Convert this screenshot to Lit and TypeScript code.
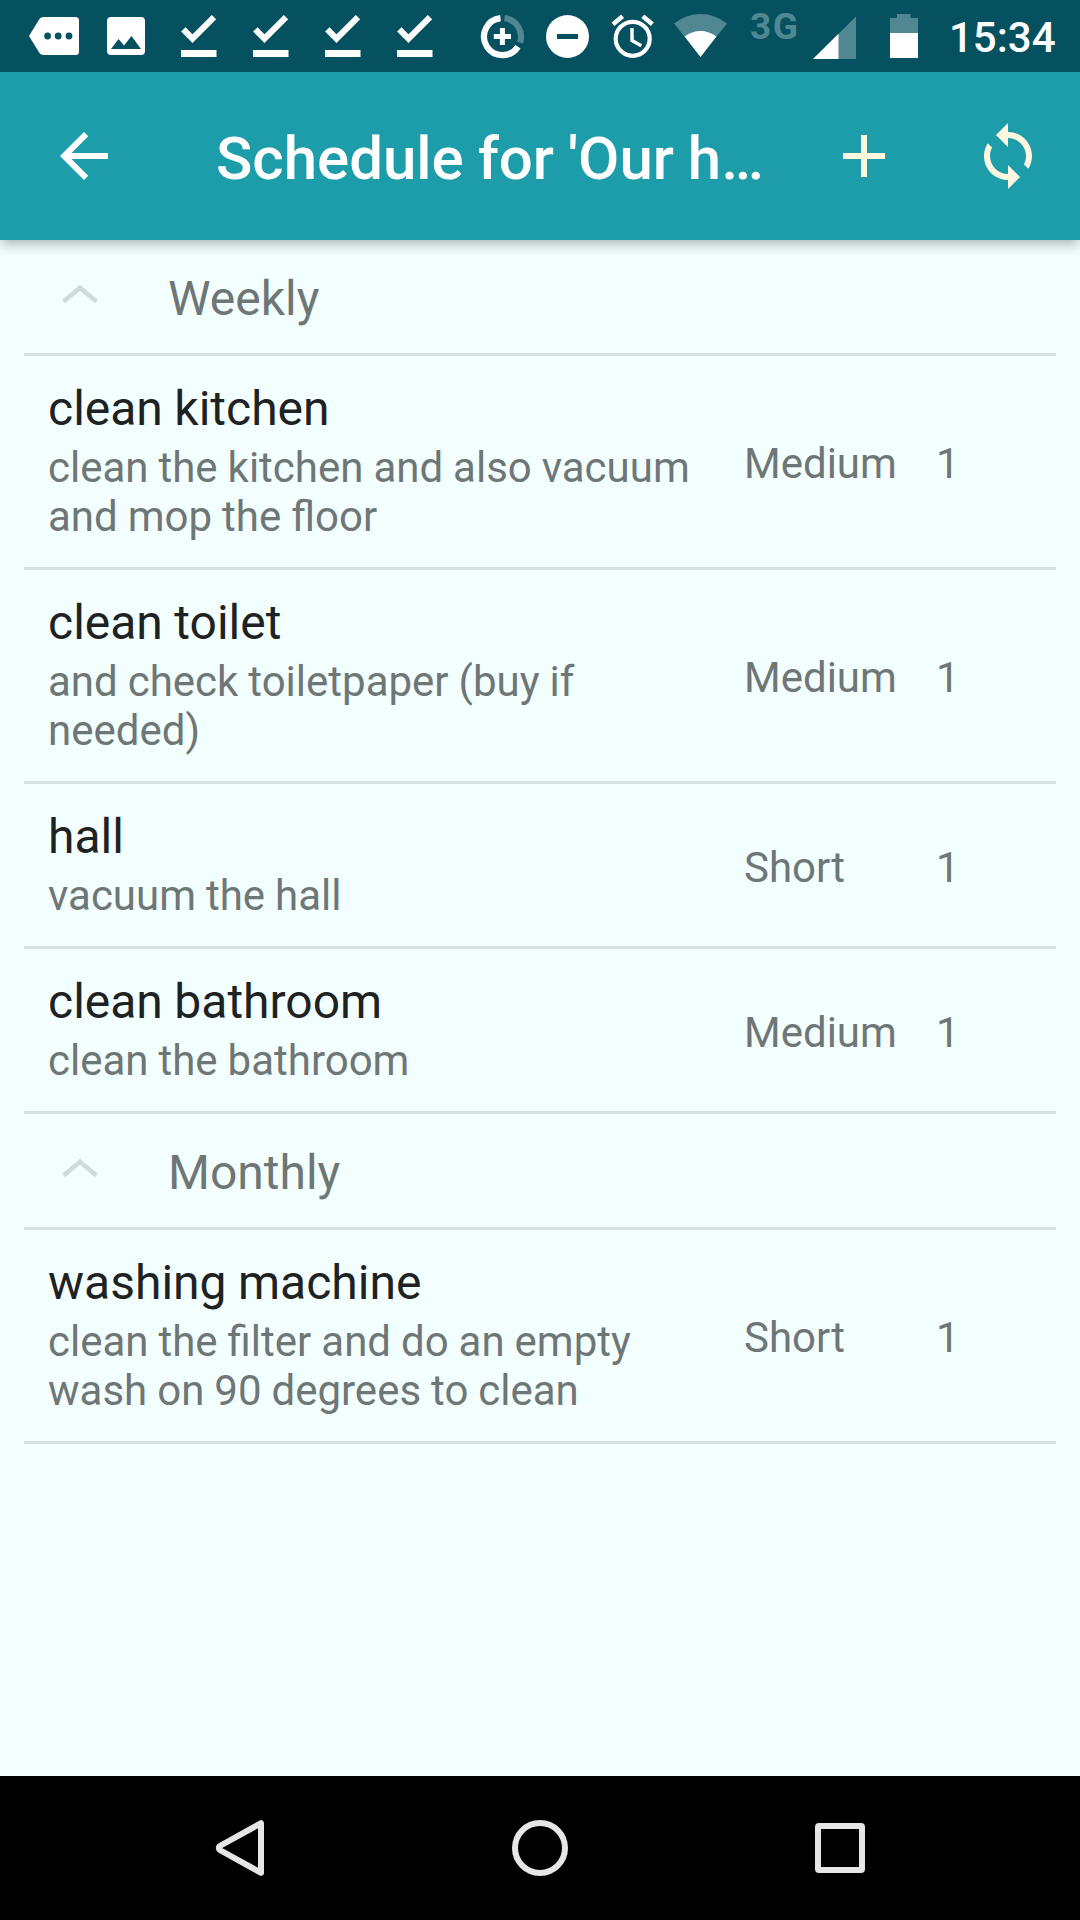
import { LitElement, html, css, svg } from "lit";
import { customElement, property } from "lit/decorators.js";

interface Task {
  name: string;
  note: string[];
  length: string;
  count: number;
}

interface Group {
  title: string;
  tasks: Task[];
}

const groups: Group[] = [
  {
    title: "Weekly",
    tasks: [
      { name: "clean kitchen", note: ["clean the kitchen and also vacuum", "and mop the floor"], length: "Medium", count: 1 },
      { name: "clean toilet", note: ["and check toiletpaper (buy if", "needed)"], length: "Medium", count: 1 },
      { name: "hall", note: ["vacuum the hall"], length: "Short", count: 1 },
      { name: "clean bathroom", note: ["clean the bathroom"], length: "Medium", count: 1 },
    ],
  },
  {
    title: "Monthly",
    tasks: [
      { name: "washing machine", note: ["clean the filter and do an empty", "wash on 90 degrees to clean"], length: "Short", count: 1 },
    ],
  },
];

const checkGlyph = svg`
  <path d="M12.300 29.400L21.500 38.600L43 17.100" fill="none" stroke="#fff" stroke-width="6.200"/>
  <rect x="10" y="50" width="35.500" height="7" fill="#fff"/>`;

@customElement("status-bar")
export class StatusBar extends LitElement {
  static styles = css`
    :host {
      display: flex;
      height: 72px;
      padding-left: 18px;
      box-sizing: border-box;
      background: #055160;
      color: #fff;
      font-family: Roboto, "Liberation Sans", sans-serif;
    }
    svg { display: block; flex: none; }
    .system { display: flex; margin-left: 25px; }
    .network {
      width: 58px;
      padding-top: 6px;
      margin-left: 8px;
      font-size: 37px;
      font-weight: 700;
      line-height: 42px;
      letter-spacing: 1.5px;
      color: #508791;
      white-space: nowrap;
    }
    .signal { margin-left: 5px; }
    .battery { margin-left: 31px; }
    .clock {
      margin-left: 29px;
      padding-top: 13px;
      font-size: 42px;
      font-weight: 500;
      line-height: 49px;
      white-space: nowrap;
    }
  `;

  render() {
    return html`
      <svg width="72" height="72" viewBox="0 0 72 72">
        <path fill="#fff" d="M11 36L21.3 19.200Q22.800 17 25.500 17H57.500Q61 17 61 20.500V51.500Q61 55 57.500 55H25.500Q22.800 55 21.300 52.800Z"/>
        <g fill="#055160"><circle cx="29.600" cy="36" r="3.400"/><circle cx="40.200" cy="36" r="3.400"/><circle cx="51" cy="36" r="3.400"/></g>
      </svg>
      <svg width="72" height="72" viewBox="0 0 72 72">
        <rect x="17" y="17" width="38" height="38" rx="4" fill="#fff"/>
        <path fill="#055160" d="M21 49L28.500 39L34 45.500L41.500 36L51 49Z"/>
      </svg>
      ${[0, 1, 2, 3].map(() => html`<svg width="72" height="72" viewBox="-9 0 72 72">${checkGlyph}</svg>`)}
      <div class="system">
        <svg width="65" height="72" viewBox="0 0 65 72">
          <path fill="none" stroke="#fff" stroke-width="6.200" d="M25.500 18.200A18.500 18.500 0 1 0 43 46.700"/>
          <path fill="none" stroke="#508791" stroke-width="6.200" d="M29.500 18.200A18.500 18.500 0 0 1 45 42.500"/>
          <path stroke="#fff" stroke-width="5" d="M18.800 36.500H36M27.400 28V45"/>
        </svg>
        <svg width="65" height="72" viewBox="0 0 65 72">
          <circle cx="27.500" cy="36.500" r="21.500" fill="#fff"/>
          <rect x="17" y="34" width="21" height="5" fill="#055160"/>
        </svg>
        <svg width="65" height="72" viewBox="0 0 65 72">
          <circle cx="27.700" cy="38.800" r="17" fill="none" stroke="#fff" stroke-width="4.200"/>
          <path fill="none" stroke="#fff" stroke-width="3.400" d="M27 28V40.500L36.300 45.800"/>
          <path stroke="#fff" stroke-width="4.600" d="M8 24.200L17.600 16.300M47.400 24.200L37.800 16.300"/>
        </svg>
        <svg width="72" height="72" viewBox="-1 0 72 72">
          <path fill="#508791" d="M29.500 57L3 23.500Q15 14 29.500 14T56 23.500Z"/>
          <path fill="#fff" d="M29.500 57L13.700 36.500Q21 31 29.500 31T45.300 36.500Z"/>
        </svg>
      </div>
      <div class="network">3G</div>
      <svg class="signal" width="44" height="72" viewBox="0 0 44 72">
        <path fill="#508791" d="M0 59L43 16.500V59Z"/>
        <path fill="#fff" d="M0 59L25.500 33.700V59Z"/>
      </svg>
      <svg class="battery" width="32" height="72" viewBox="0 0 32 72">
        <path fill="#508791" d="M2 18H9V14H22.500V18H30V33H2Z"/>
        <rect x="2" y="33" width="28" height="25" fill="#fff"/>
      </svg>
      <div class="clock">15:34</div>
    `;
  }
}

@customElement("title-bar")
export class TitleBar extends LitElement {
  @property() heading = "";

  static styles = css`
    :host {
      display: flex;
      align-items: center;
      height: 168px;
      padding: 0 36px 0 48px;
      box-sizing: border-box;
      background: #1d9caa;
      color: #fff;
      font-family: Roboto, "Liberation Sans", sans-serif;
    }
    svg { display: block; flex: none; }
    .heading {
      flex: 1;
      margin: 0 0 0 96px;
      padding-top: 6px;
      font-size: 60px;
      font-weight: 500;
      line-height: 70px;
      word-spacing: -1px;
      white-space: nowrap;
    }
    .actions { display: flex; gap: 72px; }
  `;

  render() {
    return html`
      <svg width="72" height="72" viewBox="0 0 24 24"><path fill="#fff" d="M20 11H7.830l5.590-5.590L12 4l-8 8 8 8 1.410-1.410L7.830 13H20v-2z"/></svg>
      <h1 class="heading">${this.heading}</h1>
      <div class="actions">
        <svg width="72" height="72" viewBox="0 0 24 24"><path fill="#fff8e1" d="M19 13h-6v6h-2v-6H5v-2h6V5h2v6h6v2z"/></svg>
        <svg width="72" height="72" viewBox="0 0 24 24"><path fill="#fff8e1" d="M12 4V1L8 5l4 4V6c3.310 0 6 2.690 6 6 0 1.010-.25 1.970-.7 2.800l1.460 1.460C19.540 15.030 20 13.570 20 12c0-4.420-3.580-8-8-8zm0 14c-3.310 0-6-2.690-6-6 0-1.010.25-1.970.7-2.800L5.240 7.740C4.460 8.970 4 10.430 4 12c0 4.420 3.580 8 8 8v3l4-4-4-4v3z"/></svg>
      </div>
    `;
  }
}

@customElement("task-row")
export class TaskRow extends LitElement {
  @property({ attribute: false }) task!: Task;

  static styles = css`
    :host {
      display: grid;
      grid-template-columns: 696px 192px 1fr;
      align-items: center;
      padding: 25px 0 26px 24px;
      border-bottom: 3px solid #d5e0e0;
      font-family: Roboto, "Liberation Sans", sans-serif;
      font-size: 42px;
      line-height: 49px;
      word-spacing: -0.45px;
      color: #6f7676;
    }
    .name {
      margin-bottom: 6px;
      font-size: 48px;
      line-height: 56px;
      color: #1f2222;
    }
    .line { white-space: nowrap; }
    .cell { padding-top: 5px; }
  `;

  render() {
    const { name, note, length, count } = this.task;
    return html`
      <div>
        <div class="name">${name}</div>
        ${note.map((line) => html`<div class="line">${line}</div>`)}
      </div>
      <div class="cell">${length}</div>
      <div class="cell">${count}</div>
    `;
  }
}

@customElement("group-header")
export class GroupHeader extends LitElement {
  @property() label = "";

  static styles = css`
    :host {
      display: flex;
      height: 113px;
      border-bottom: 3px solid #d5e0e0;
      font-family: Roboto, "Liberation Sans", sans-serif;
      font-size: 48px;
      line-height: 56px;
      color: #6f7676;
    }
    svg { display: block; flex: none; }
    .label { padding-top: 31px; }
  `;

  render() {
    return html`
      <svg width="144" height="113" viewBox="24 0 144 113"><path fill="none" stroke="#d0dada" stroke-width="4.600" d="M63.600 61.600L80 47.800L96.400 61.600"/></svg>
      <div class="label">${this.label}</div>
    `;
  }
}

@customElement("nav-bar")
export class NavBar extends LitElement {
  static styles = css`
    :host {
      display: flex;
      justify-content: center;
      align-items: center;
      height: 144px;
      background: #000;
    }
    svg { display: block; width: 300px; height: 144px; }
    .shape { fill: none; stroke: #e6e6e6; stroke-width: 6; stroke-linejoin: round; }
  `;

  render() {
    return html`
      <svg viewBox="0 0 300 144"><path class="shape" d="M171 47.200V96.800L129.800 74Q128 72 129.800 70Z"/></svg>
      <svg viewBox="0 0 300 144"><circle class="shape" cx="150" cy="72" r="25"/></svg>
      <svg viewBox="0 0 300 144"><rect class="shape" x="128" y="50" width="44" height="44" rx="1"/></svg>
    `;
  }
}

@customElement("app-root")
export class AppRoot extends LitElement {
  static styles = css`
    :host {
      display: flex;
      flex-direction: column;
      width: 1080px;
      height: 1920px;
      overflow: hidden;
      background: #f3ffff;
    }
    .top { z-index: 1; box-shadow: 0 5px 12px -1px rgba(0, 0, 0, 0.3); }
    .list { flex: 1; padding: 0 24px; }
  `;

  render() {
    return html`
      <div class="top">
        <status-bar></status-bar>
        <title-bar heading="Schedule for 'Our h…"></title-bar>
      </div>
      <main class="list">
        ${groups.map(
          (g) => html`
            <group-header label=${g.title}></group-header>
            ${g.tasks.map((t) => html`<task-row .task=${t}></task-row>`)}
          `
        )}
      </main>
      <nav-bar></nav-bar>
    `;
  }
}
